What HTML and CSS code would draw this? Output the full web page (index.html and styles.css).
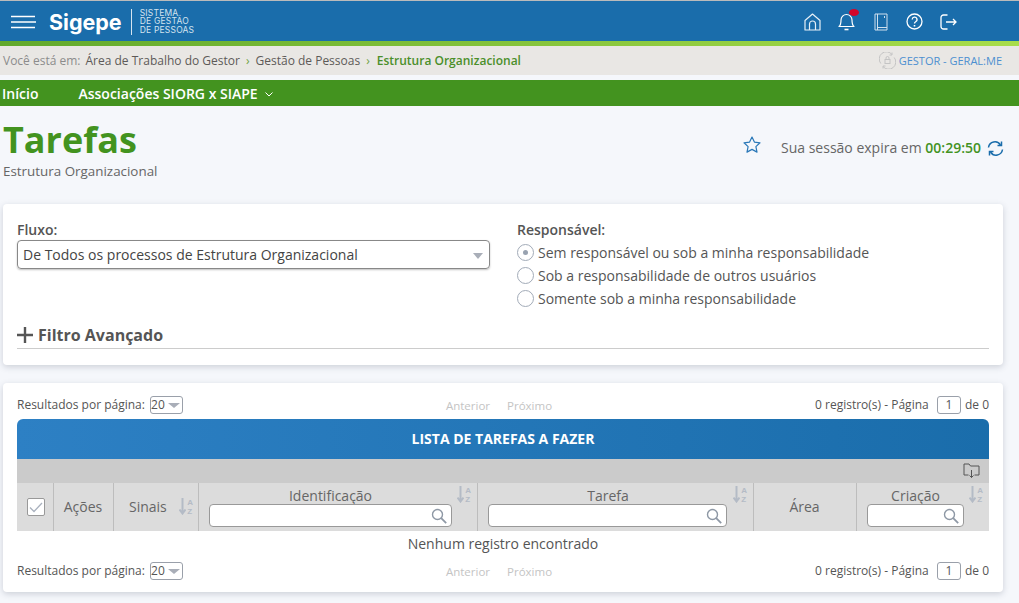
FILE: index.html
```html
<!DOCTYPE html>
<html lang="pt-BR">
<head>
<meta charset="utf-8">
<title>Sigepe - Tarefas</title>
<link rel="stylesheet" href="styles.css">
</head>
<body>
<header class="topbar">
  <div class="brand">
    <svg class="burger" width="25" height="14" viewBox="0 0 25 14"><path d="M0 1.500h24M0 7h25M0 12.500h24" stroke="#fff" stroke-width="1.600" fill="none"/></svg>
    <span class="logo">Sigepe</span>
    <span class="logo-sub">SISTEMA<br>DE GESTÃO<br>DE PESSOAS</span>
  </div>
  <nav class="top-icons">
    <svg width="17" height="18" viewBox="0 0 17 18" fill="none" stroke="#e6f0f7" stroke-width="1.200"><path d="M1 7.500 8.500 1 16 7.500V17H1Z" stroke-linejoin="round"/><path d="M5.500 17v-6a3 3 0 0 1 6 0v6"/></svg>
    <span class="bell"><svg width="17" height="19" viewBox="0 0 17 19" fill="none" stroke="#fff" stroke-width="1.200"><path d="M1 14.500c2-1.500 2-3 2-6.500a5.500 5.500 0 0 1 11 0c0 3.500 0 5 2 6.500Z" stroke-linejoin="round"/><path d="M6.500 17.500h4" stroke-width="1.600"/></svg><i class="dot"></i></span>
    <svg class="book" width="14" height="18" viewBox="0 0 14 18" fill="none" stroke="#cfe0ee" stroke-width="1"><path d="M1 1h12v16H1ZM3.500 1v16M13 14.500H3.500M10.500 3v2"/></svg>
    <svg width="17" height="17" viewBox="0 0 17 17" fill="none" stroke="#fff" stroke-width="1.300"><circle cx="8.500" cy="8.500" r="7.500"/><path d="M6.200 6.600a2.400 2.400 0 1 1 3.500 2.100c-.8.500-1.200.9-1.200 1.800"/><path d="M8.500 12v1.500" stroke-width="1.600"/></svg>
    <svg width="17" height="16" viewBox="0 0 17 16" fill="none" stroke="#fff" stroke-width="1.300"><path d="M7.500 1H3.500a2.500 2.500 0 0 0-2.500 2.500v9A2.500 2.500 0 0 0 3.500 15h4"/><path d="M6 8h10M13 5l3 3-3 3"/></svg>
  </nav>
</header>
<div class="strip"></div>
<div class="crumbs">
  <div class="crumb-path">
    <span class="muted">Você está em:</span>
    <span>Área de Trabalho do Gestor</span><b class="sep">›</b>
    <span>Gestão de Pessoas</span><b class="sep">›</b>
    <strong>Estrutura Organizacional</strong>
  </div>
  <div class="profile">
    <svg width="17" height="17" viewBox="0 0 17 17" fill="none" stroke="#c4c4c4" stroke-width="1"><path d="M1.800 11.500A7 7 0 0 1 13 2.500M15.200 5.500A7 7 0 0 1 4 14.500"/><path d="M13 .5v2.500h-2.500M4 16.500V14h2.500"/><rect x="6" y="7.500" width="5" height="4"/><path d="M7 7.500V6a1.500 1.500 0 0 1 3 0v1.500"/></svg>
    <span>GESTOR - GERAL:ME</span>
  </div>
</div>
<nav class="menu">
  <a class="menu-home">Início</a>
  <a>Associações SIORG x SIAPE <svg width="8" height="5" viewBox="0 0 8 5" fill="none" stroke="#fff" stroke-width="1"><path d="M.5.500 4 4 7.500.500"/></svg></a>
</nav>
<section class="title-row">
  <div>
    <h1>Tarefas</h1>
    <p class="subtitle">Estrutura Organizacional</p>
  </div>
  <div class="session">
    <svg class="star" width="18" height="17" viewBox="0 0 18 17" fill="none" stroke="#2a78b8" stroke-width="1.200"><path d="m9 1 2.400 5.100 5.600.7-4.100 3.800 1.100 5.500L9 13.400l-5 2.700 1.100-5.500L1 6.800l5.600-.7Z" stroke-linejoin="round"/></svg>
    <span class="session-text">Sua sessão expira em <b>00:29:50</b></span>
    <svg width="17" height="15" viewBox="0 0 17 15" fill="none" stroke="#1a6dab" stroke-width="1.500"><path d="M1.500 6.500A6.500 6.500 0 0 1 13.500 4M15.500 8.500A6.500 6.500 0 0 1 3.500 11"/><path d="M14.500.500v4h-4M2.500 14.500v-4h4"/></svg>
  </div>
</section>
<section class="card filter-card">
  <div class="filter-cols">
    <div class="fluxo">
      <label>Fluxo:</label>
      <div class="select">De Todos os processos de Estrutura Organizacional<i class="caret"></i></div>
    </div>
    <div class="resp">
      <label>Responsável:</label>
      <div class="radio"><i class="circle on"></i>Sem responsável ou sob a minha responsabilidade</div>
      <div class="radio"><i class="circle"></i>Sob a responsabilidade de outros usuários</div>
      <div class="radio"><i class="circle"></i>Somente sob a minha responsabilidade</div>
    </div>
  </div>
  <div class="advanced"><svg width="16" height="16" viewBox="0 0 16 16"><path d="M0 8h16M8 0v16" stroke="#555" stroke-width="2.400"/></svg>Filtro Avançado</div>
</section>
<section class="card list-card">
  <div class="pager">
    <div class="pg-left">Resultados por página: <span class="mini-select">20<i class="caret"></i></span></div>
    <div class="pg-mid"><span>Anterior</span><span>Próximo</span></div>
    <div class="pg-right">0 registro(s) - Página <span class="page-box">1</span> de 0</div>
  </div>
  <div class="list-title">LISTA DE TAREFAS A FAZER</div>
  <div class="tool-row">
    <svg width="17" height="16" viewBox="0 0 17 16" fill="none" stroke="#555" stroke-width="1"><path d="M5.500 12H1V1h5l1.500 2H16v9h-4.500"/><path d="M8.500 7v7.500M6.500 12.500l2 2 2-2"/></svg>
  </div>
  <div class="thead">
    <div class="th"><span class="check"><svg width="14" height="11" viewBox="0 0 14 11" fill="none" stroke="#a9b1be" stroke-width="1.300"><path d="m1 5.500 4 4L13 1"/></svg></span></div>
    <div class="th th-plain">Ações</div>
    <div class="th th-sort">Sinais<span class="sort side"><svg width="7" height="17" viewBox="0 0 7 17" fill="none" stroke="#b4bbc6" stroke-width="2"><path d="M3.500 0v15M.5 11.500l3 4 3-4"/></svg><small>A<br>Z</small></span></div>
    <div class="th th-filter">Identificação<span class="sort"><svg width="7" height="17" viewBox="0 0 7 17" fill="none" stroke="#b4bbc6" stroke-width="2"><path d="M3.500 0v15M.5 11.500l3 4 3-4"/></svg><small>A<br>Z</small></span><span class="search"><svg width="16" height="16" viewBox="0 0 16 16" fill="none" stroke="#8e98a5" stroke-width="1.400"><circle cx="6.500" cy="6.500" r="5"/><path d="m10.200 10.200 5 5" stroke-width="1.800"/></svg></span></div>
    <div class="th th-filter">Tarefa<span class="sort"><svg width="7" height="17" viewBox="0 0 7 17" fill="none" stroke="#b4bbc6" stroke-width="2"><path d="M3.500 0v15M.5 11.500l3 4 3-4"/></svg><small>A<br>Z</small></span><span class="search"><svg width="16" height="16" viewBox="0 0 16 16" fill="none" stroke="#8e98a5" stroke-width="1.400"><circle cx="6.500" cy="6.500" r="5"/><path d="m10.200 10.200 5 5" stroke-width="1.800"/></svg></span></div>
    <div class="th th-plain">Área</div>
    <div class="th th-filter th-date">Criação<span class="sort"><svg width="7" height="17" viewBox="0 0 7 17" fill="none" stroke="#b4bbc6" stroke-width="2"><path d="M3.500 0v15M.5 11.500l3 4 3-4"/></svg><small>A<br>Z</small></span><span class="search"><svg width="16" height="16" viewBox="0 0 16 16" fill="none" stroke="#8e98a5" stroke-width="1.400"><circle cx="6.500" cy="6.500" r="5"/><path d="m10.200 10.200 5 5" stroke-width="1.800"/></svg></span></div>
  </div>
  <div class="empty">Nenhum registro encontrado</div>
  <div class="pager bottom">
    <div class="pg-left">Resultados por página: <span class="mini-select">20<i class="caret"></i></span></div>
    <div class="pg-mid"><span>Anterior</span><span>Próximo</span></div>
    <div class="pg-right">0 registro(s) - Página <span class="page-box">1</span> de 0</div>
  </div>
</section>
</body>
</html>
```
FILE: styles.css
```css
* { box-sizing: border-box; }
html, body { margin: 0; height: 603px; overflow: hidden; }
body { background: #f5f7fb; font-family: "Open Sans", sans-serif; color: #555; font-size: 13px; }
i, em { font-style: normal; }

.topbar { height: 41px; margin-top: 1px; background: #1a6dab; display: flex; justify-content: space-between; align-items: center; box-shadow: 0 -1px 0 #bbb; }
.brand { display: flex; align-items: center; padding-left: 11px; }
.burger { margin-right: 13px; }
.logo { font-family: "Inter", sans-serif; font-weight: 700; font-size: 21.500px; color: #fff; padding-right: 9px; border-right: 1px solid #d5e4f0; line-height: 26px; }
.logo-sub { font-family: "Inter", sans-serif; font-size: 8.500px; line-height: 8.500px; letter-spacing: .2px; color: #d3e3ef; padding-left: 8px; }
.top-icons { display: flex; align-items: center; gap: 17px; padding-right: 62px; }
.book { margin: 0 1.500px; }
.bell { position: relative; display: flex; }
.dot { position: absolute; right: -4px; top: -3px; width: 10px; height: 7px; border-radius: 50%; background: #d3062a; }

.strip { height: 5px; background: linear-gradient(90deg, #62a92c, #a8dd4a); margin-top: -1px; }
.crumbs { height: 29px; background: #e9e7e4; display: flex; justify-content: space-between; align-items: center; padding: 0 17px 1px 3px; font-size: 12px; color: #5d5a58; }
.crumb-path { display: flex; align-items: center; }
.muted { color: #8c8c8c; margin-right: 5px; }
.sep { color: #6fa33f; margin: 0 6px; font-weight: 400; }
.sep:nth-of-type(2) { margin-right: 7px; }
.crumb-path strong { color: #4b8f2a; font-weight: 600; }
.profile { display: flex; align-items: center; gap: 3px; font-size: 11px; color: #4c8fd0; }

.menu { height: 26px; margin-top: 5px; background: #43931f; display: flex; align-items: center; color: #fff; font-weight: 600; font-size: 14px; padding-left: 2px; }
.menu-home { margin-right: 40px; }
.menu svg { margin: 0 0 2px 4px; }

.title-row { display: flex; justify-content: space-between; height: 98px; padding-left: 3px; }
h1 { margin: 13px 0 0; font-size: 36px; line-height: 42px; font-weight: 700; color: #43931f; }
.subtitle { margin: 1px 0 0; font-size: 13.400px; line-height: 18px; color: #666; }
.session { display: flex; align-items: flex-start; padding: 30px 15px 0 0; }
.star { margin-right: 20px; }
.session-text { font-size: 14px; line-height: 20px; margin: 2px 6px 0 0; color: #666; }
.session-text b { color: #43931f; font-weight: 600; }
.session > svg:last-child { margin-top: 5px; }

.card { background: #fff; margin: 0 16px 0 3px; border-radius: 4px; box-shadow: 0 2px 6px rgba(60, 70, 90, .22); }
.filter-card { height: 161px; padding: 16px 14px 0; }
.filter-cols { display: flex; height: 100px; }
.fluxo { width: 500px; }
label { display: block; font-size: 14px; font-weight: 600; line-height: 20px; color: #555; }
.resp label { margin-bottom: 1px; }
.select { position: relative; width: 473px; height: 29px; border: 1px solid #888; border-radius: 4px; padding-left: 5px; font-size: 14px; line-height: 27px; color: #444; box-shadow: 0 1px 2px rgba(0, 0, 0, .25); }
.caret { position: absolute; right: 5px; top: 12px; border: 5px solid transparent; border-top: 6px solid #a9aeb8; border-bottom: 0; width: 0; height: 0; }
.select .caret { right: 6px; }
.radio { display: flex; align-items: center; height: 23px; font-size: 14px; color: #555; white-space: nowrap; }
.circle { width: 17px; height: 17px; border-radius: 50%; border: 1px solid #a2abb8; margin-right: 4px; display: flex; align-items: center; justify-content: center; }
.circle.on::after { content: ""; width: 5px; height: 5px; border-radius: 50%; background: #98a2b0; }
.advanced { display: flex; align-items: center; gap: 5px; height: 29px; padding-top: 2px; border-bottom: 1px solid #ccc; font-size: 16px; font-weight: 700; color: #555; }

.list-card { height: 209px; margin-top: 18px; padding: 0 14px; }
.pager { height: 36px; display: grid; grid-template-columns: 1fr 1fr 1fr; align-items: center; font-size: 12px; color: #555; padding-top: 8px; }
.pg-mid { display: flex; gap: 17px; justify-content: center; color: #c4c4c4; font-size: 11.500px; padding-right: 8px; }
.pg-right { text-align: right; }
.mini-select { position: relative; display: inline-block; width: 33px; height: 18px; margin-left: 2px; border: 1px solid #9aa0aa; border-radius: 3px; line-height: 16px; vertical-align: middle; }
.mini-select .caret { right: 2px; top: 6px; border-width: 5px 6px 0; }
.page-box { display: inline-block; width: 24px; height: 18px; margin: 0 1px 0 5px; border: 1px solid #9aa0aa; border-radius: 3px; text-align: center; line-height: 16px; vertical-align: middle; }
.list-title { height: 40px; border-radius: 6px 6px 0 0; background: linear-gradient(90deg, #2d80c4, #1a6dab); color: #fff; font-weight: 700; font-size: 14px; line-height: 40px; text-align: center; }
.tool-row { height: 24px; background: #cbcbcb; display: flex; justify-content: flex-end; align-items: center; padding-right: 9px; }
.thead { height: 48px; background: #dcdcdc; display: grid; grid-template-columns: 36px 60px 85px 279px 276px 103px 133px; font-size: 14px; color: #666; }
.th { position: relative; display: flex; align-items: center; justify-content: center; border-left: 1px solid #bdbdbd; padding-bottom: 2px; }
.th:first-child { border-left: 0; padding: 0 0 0 2px; }
.th-plain { padding-right: 1px; }
.th-sort { justify-content: flex-start; padding-left: 15px; }
.th-filter { align-items: flex-start; line-height: 26px; padding: 0 15px 0 0; }
.check { width: 18px; height: 18px; background: #fff; border: 1px solid #999; border-radius: 2px; display: flex; align-items: center; justify-content: center; }
.sort { position: absolute; right: 6px; top: 3px; display: flex; gap: 1px; color: #b4bbc6; }
.sort.side { top: 15px; right: 5px; }
.sort small { font-family: "Liberation Sans", sans-serif; font-size: 8px; line-height: 9.300px; font-weight: 700; }
.search { position: absolute; left: 10px; top: 21px; width: 243px; height: 23px; background: #fff; border: 1px solid #999; border-radius: 4px; display: flex; justify-content: flex-end; align-items: center; padding-right: 4px; }
.th-filter:nth-child(5) .search { width: 239px; }
.th-date .search { width: 97px; }
.empty { height: 26px; text-align: center; font-size: 14px; line-height: 26px; color: #555; }
.pager.bottom { height: 27px; padding-top: 1px; }
```
